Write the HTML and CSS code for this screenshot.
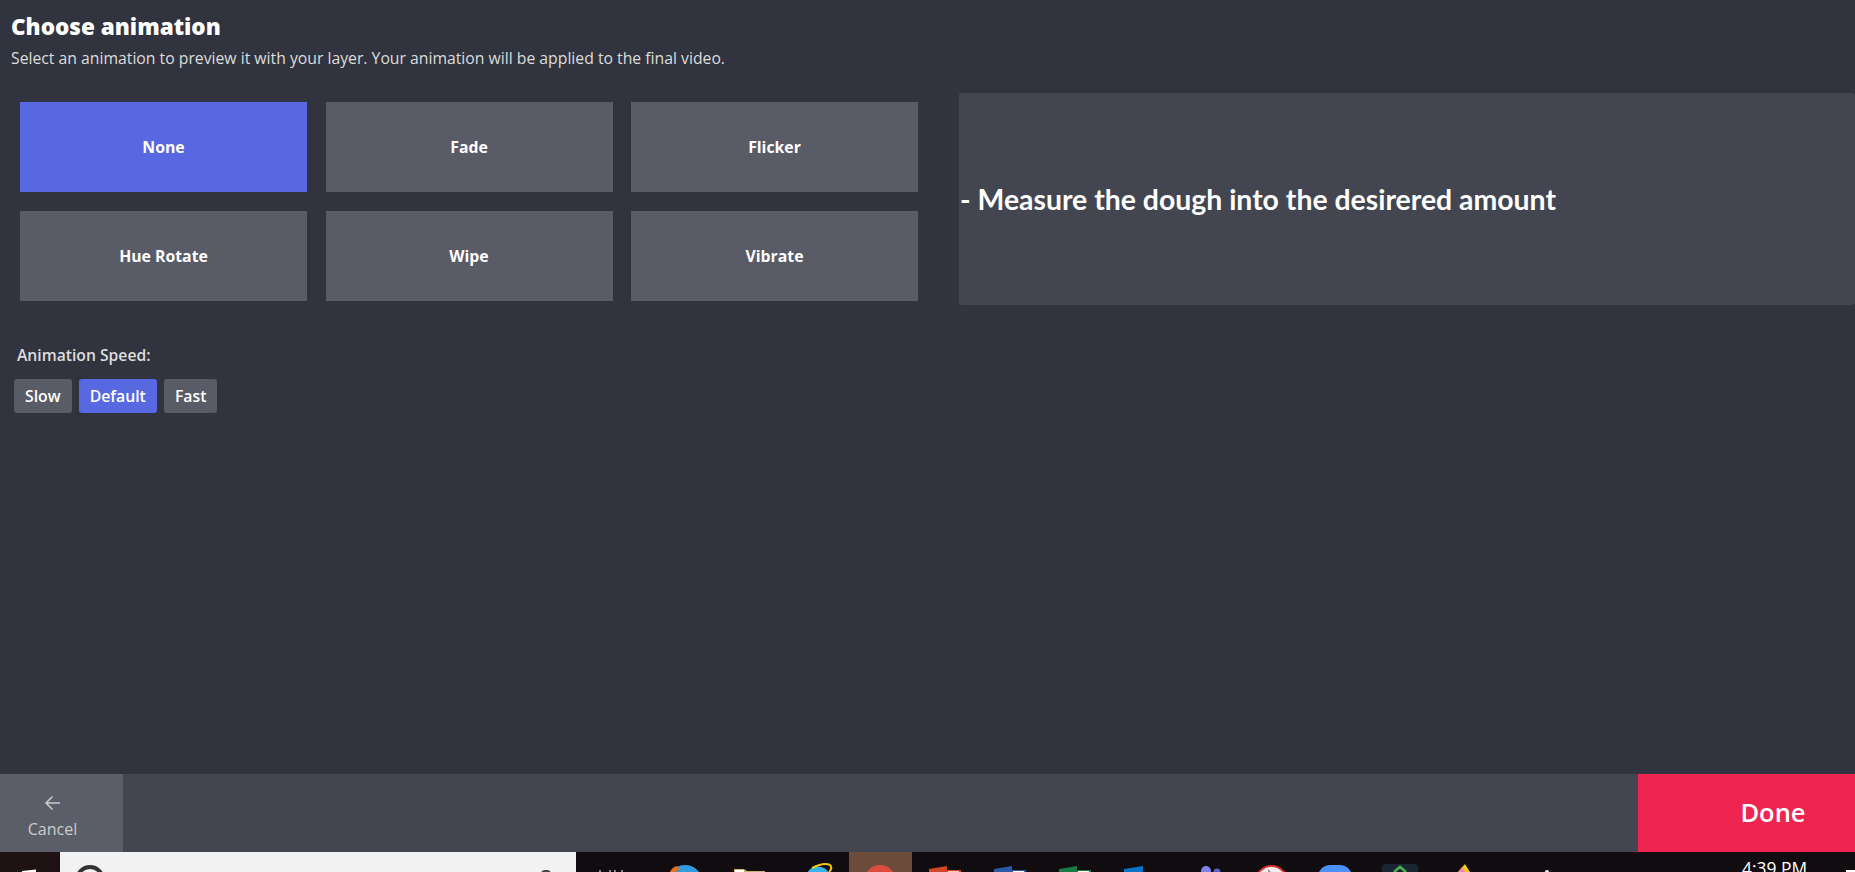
FILE: index.html
```html
<!DOCTYPE html>
<html lang="en">
<head>
  <meta charset="UTF-8" />
  <meta name="viewport" content="width=device-width, initial-scale=1" />
  <title>Choose animation</title>
  <link rel="stylesheet" href="styles.css">
</head>
<body>

  <main class="main">
    <h1 class="title">Choose animation</h1>
    <p class="subtitle">Select an animation to preview it with your layer. Your animation will be applied to the final video.</p>

    <div class="content">
      <div class="options">
        <div class="tiles">
          <div class="tile tile-active">None</div>
          <div class="tile">Fade</div>
          <div class="tile">Flicker</div>
          <div class="tile">Hue Rotate</div>
          <div class="tile">Wipe</div>
          <div class="tile">Vibrate</div>
        </div>
        <div class="speed-label">Animation Speed:</div>
        <div class="speed">
          <div class="speed-btn">Slow</div>
          <div class="speed-btn speed-active">Default</div>
          <div class="speed-btn">Fast</div>
        </div>
      </div>
      <div class="preview">- Measure the dough into the desirered amount</div>
    </div>
  </main>

  <footer class="actions">
    <div class="cancel">
      <svg class="cancel-icon" width="18" height="18" viewBox="0 0 18 18" fill="none" stroke="currentColor" stroke-width="1.5">
        <path d="M16 9H2.5M8.500 2.500 2 9l6.500 6.500" />
      </svg>
      <span>Cancel</span>
    </div>
    <div class="done">Done</div>
  </footer>

  <!-- windows taskbar, only the top 20px is on screen -->
  <div class="taskbar">
    <div class="start">
      <svg width="60" height="20" viewBox="0 0 60 20">
        <path d="M22 20v-1l14-1.500V20z" fill="#fff" />
      </svg>
    </div>
    <div class="search">
      <svg width="516" height="20" viewBox="60 852 516 20">
        <circle cx="90" cy="880" r="13" fill="none" stroke="#333" stroke-width="4" />
        <rect x="541" y="870" width="10" height="12" rx="4" fill="#444" />
      </svg>
    </div>
    <svg class="tray-icons" width="1279" height="20" viewBox="576 852 1279 20">
      <path d="M600 870v2M610 870v2M615 870v2M622 870v2" stroke="#fff" stroke-width="1" />

      <circle cx="685" cy="882.500" r="17.500" fill="#2f9be0" />
      <path d="M670 872q2-5 7-6l3 3-4 3z" fill="#e0702a" />

      <path d="M734 872v-3h10l3 2h18v1z" fill="#c9b468" />
      <path d="M735 872v-2h9v2z" fill="#fff" />

      <circle cx="818" cy="879" r="12.500" fill="#35b5ee" />
      <path d="M812 868q12-6 18-3 3 3-1 7" fill="none" stroke="#f0c419" stroke-width="2" />

      <rect x="849" y="852" width="63" height="20" fill="#6b4c3b" />
      <circle cx="880" cy="880.600" r="15.600" fill="#dd4b3e" />

      <path d="M929 872v-3l18-3v6z" fill="#d24726" />
      <path d="M947 870h14v2h-14z" fill="#d24726" />
      <path d="M948 871h11v1h-11z" fill="#f6c9b8" />

      <path d="M994 872v-3l18-3v6z" fill="#2b5aa8" />
      <path d="M1012 870h14v2h-14z" fill="#2b5aa8" />
      <path d="M1013 871h11v1h-11z" fill="#fff" />

      <path d="M1059 872v-3l18-3v6z" fill="#1d7a45" />
      <path d="M1077 870h14v2h-14z" fill="#1d7a45" />
      <path d="M1078 871h11v1h-11z" fill="#fff" />

      <path d="M1124 872v-3l19-3v6z" fill="#0a72c8" />

      <circle cx="1206" cy="871" r="5" fill="#7b83eb" />
      <circle cx="1217" cy="872" r="3.500" fill="#5c62c4" />

      <circle cx="1271.500" cy="881.500" r="15.500" fill="#f4efef" stroke="#d9323a" stroke-width="2" />
      <path d="M1268 869l3 3h-3z" fill="#999" />

      <rect x="1318" y="865" width="34" height="24" rx="12" fill="#4a90f5" />

      <rect x="1382" y="864" width="36" height="20" rx="4" fill="#182733" />
      <path d="M1394 872l6-5 6 5" fill="none" stroke="#4caf50" stroke-width="2.500" />

      <path d="M1465 864l5 8h-12z" fill="#f7c913" />
      <path d="M1458 872l4-5 3 5z" fill="#e88ab0" />

      <circle cx="1547" cy="872" r="2" fill="#fff" />
      <rect x="1846" y="870" width="9" height="2" fill="#fff" />
    </svg>
    <div class="clock">4:39 PM</div>
  </div>

</body>
</html>
```

FILE: styles.css
```css
* {
  box-sizing: border-box;
}
html, body {
  margin: 0;
  height: 100%;
}
body {
  font-family: "Open Sans", Arial, sans-serif;
  background: #31343f;
  color: #fff;
  display: flex;
  flex-direction: column;
  height: 872px;
  overflow: hidden;
}
.main {
  flex: 1;
  min-height: 0;
  padding: 12px 0 0 11px;
}
.title {
  margin: 0;
  font-size: 22.500px;
  font-weight: 800;
  line-height: 30px;
}
.subtitle {
  margin: 6px 0 0;
  font-size: 15.750px;
  line-height: 20px;
  color: #ddd;
}
.content {
  display: flex;
  margin-top: 25px;
}
.options {
  width: 948px;
  flex-shrink: 0;
}
.tiles {
  display: grid;
  grid-template-columns: repeat(3, 287px);
  grid-auto-rows: 90px;
  column-gap: 18.500px;
  row-gap: 19px;
  margin: 9px 0 0 9px;
}
.tile {
  display: flex;
  align-items: center;
  justify-content: center;
  background: #595b66;
  font-size: 15.800px;
  font-weight: 700;
}
.tile-active {
  background: #5768e0;
}
.speed-label {
  margin: 44px 0 0 6px;
  font-size: 15.700px;
  font-weight: 600;
  line-height: 20px;
  color: #ddd;
}
.speed {
  display: flex;
  gap: 7px;
  margin: 14px 0 0 3px;
}
.speed-btn {
  height: 34px;
  padding: 0 11px;
  border-radius: 3px;
  background: #595b66;
  font-size: 15.800px;
  font-weight: 600;
  line-height: 34px;
}
.speed-active {
  background: #5768e0;
}
.preview {
  flex: 1;
  display: flex;
  align-items: center;
  height: 212px;
  padding: 0 0 0 1px;
  border-radius: 3px;
  background: #434651;
  font-family: "Comic Sans MS", Lato, sans-serif;
  font-size: 28.400px;
  font-weight: 700;
}
.actions {
  display: flex;
  justify-content: space-between;
  height: 78px;
  flex-shrink: 0;
  background: #434651;
}
.cancel {
  display: flex;
  flex-direction: column;
  align-items: center;
  justify-content: center;
  gap: 6px;
  width: 123px;
  padding: 7px 18px 0 0;
  background: #5b5d68;
  color: #ccc;
  font-size: 16px;
}
.cancel-icon {
  display: block;
}
.done {
  display: flex;
  align-items: center;
  justify-content: center;
  width: 217px;
  padding: 0 0 2px 53px;
  background: #f0254f;
  font-size: 25.500px;
  font-weight: 600;
}
.taskbar {
  display: flex;
  height: 20px;
  flex-shrink: 0;
  position: relative;
  background: #100c10;
  overflow: hidden;
}
.start {
  width: 60px;
  background: #1e1214;
}
.search {
  width: 516px;
  background: #f2f2f2;
}
.tray-icons {
  display: block;
}
.start svg, .search svg {
  display: block;
}
.clock {
  position: absolute;
  left: 1742px;
  top: 5px;
  font-size: 17.400px;
  line-height: 22px;
  white-space: nowrap;
  color: #fff;
}
```
